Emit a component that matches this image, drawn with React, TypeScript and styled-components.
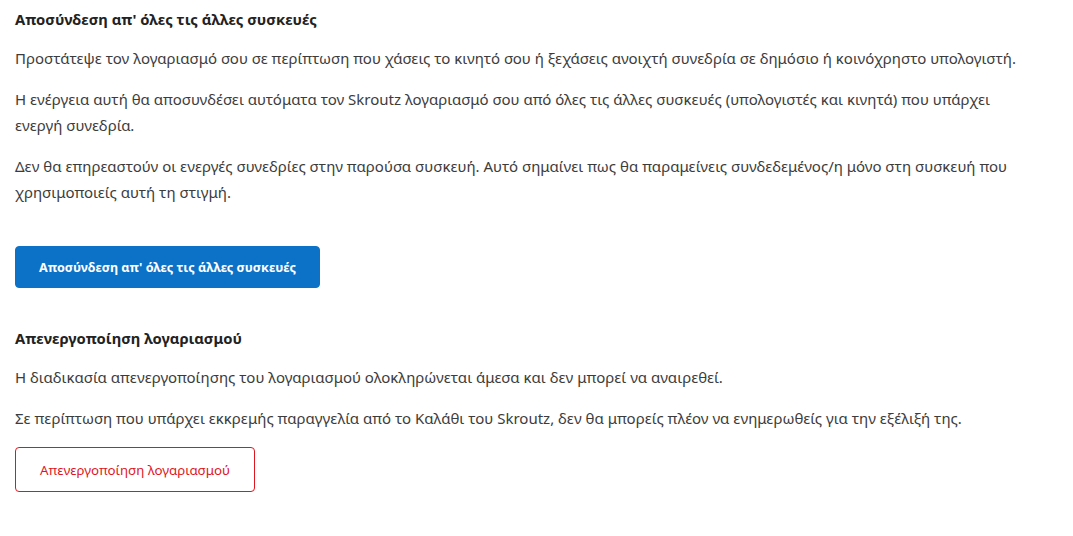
import React from "react";
import styled, { createGlobalStyle } from "styled-components";

const GlobalStyle = createGlobalStyle`
  html, body {
    margin: 0;
    padding: 0;
    background: #ffffff;
  }
  body {
    font-family: "Noto Sans", "Open Sans", sans-serif;
    -webkit-font-smoothing: antialiased;
  }
`;

const Page = styled.div`
  width: 1073px;
  padding: 8px 15px 0 15px;
  box-sizing: border-box;
  display: flex;
  flex-direction: column;
`;

const Section = styled.section`
  display: flex;
  flex-direction: column;
  align-items: flex-start;
  margin-bottom: 39px;
`;

const Title = styled.h3`
  margin: 0 0 15px 0;
  font-size: 14.8px;
  line-height: 22px;
  font-weight: 700;
  color: #222222;
`;

const Text = styled.p`
  margin: 0 0 15px 0;
  font-size: 15px;
  line-height: 26px;
  color: #3c3c3c;
  max-width: 1015px;
`;

const Button = styled.button<{ $variant: "primary" | "danger" }>`
  font-family: inherit;
  cursor: pointer;
  border-radius: 4px;
  font-size: ${({ $variant }) => ($variant === "primary" ? "12.6px" : "13.3px")};
  height: ${({ $variant }) => ($variant === "primary" ? "42px" : "45px")};
  padding: ${({ $variant }) => ($variant === "primary" ? "0 23px" : "0 24px")};
  font-weight: ${({ $variant }) => ($variant === "primary" ? 700 : 400)};
  color: ${({ $variant }) => ($variant === "primary" ? "#ffffff" : "#e0161e")};
  background: ${({ $variant }) => ($variant === "primary" ? "#0b72c8" : "#ffffff")};
  border: 1px solid ${({ $variant }) => ($variant === "primary" ? "#0b72c8" : "#e0161e")};
  margin-top: ${({ $variant }) => ($variant === "primary" ? "26px" : "1px")};
`;

export default function App() {
  return (
    <>
      <GlobalStyle />
      <Page>
        <Section>
          <Title>Αποσύνδεση απ' όλες τις άλλες συσκευές</Title>
          <Text>
            Προστάτεψε τον λογαριασμό σου σε περίπτωση που χάσεις το κινητό σου ή ξεχάσεις ανοιχτή συνεδρία σε δημόσιο ή κοινόχρηστο υπολογιστή.
          </Text>
          <Text>
            Η ενέργεια αυτή θα αποσυνδέσει αυτόματα τον Skroutz λογαριασμό σου από όλες τις άλλες συσκευές (υπολογιστές και κινητά) που υπάρχει ενεργή συνεδρία.
          </Text>
          <Text>
            Δεν θα επηρεαστούν οι ενεργές συνεδρίες στην παρούσα συσκευή. Αυτό σημαίνει πως θα παραμείνεις συνδεδεμένος/η μόνο στη συσκευή που χρησιμοποιείς αυτή τη στιγμή.
          </Text>
          <Button $variant="primary">Αποσύνδεση απ' όλες τις άλλες συσκευές</Button>
        </Section>
        <Section>
          <Title>Απενεργοποίηση λογαριασμού</Title>
          <Text>
            Η διαδικασία απενεργοποίησης του λογαριασμού ολοκληρώνεται άμεσα και δεν μπορεί να αναιρεθεί.
          </Text>
          <Text>
            Σε περίπτωση που υπάρχει εκκρεμής παραγγελία από το Καλάθι του Skroutz, δεν θα μπορείς πλέον να ενημερωθείς για την εξέλιξή της.
          </Text>
          <Button $variant="danger">Απενεργοποίηση λογαριασμού</Button>
        </Section>
      </Page>
    </>
  );
}
